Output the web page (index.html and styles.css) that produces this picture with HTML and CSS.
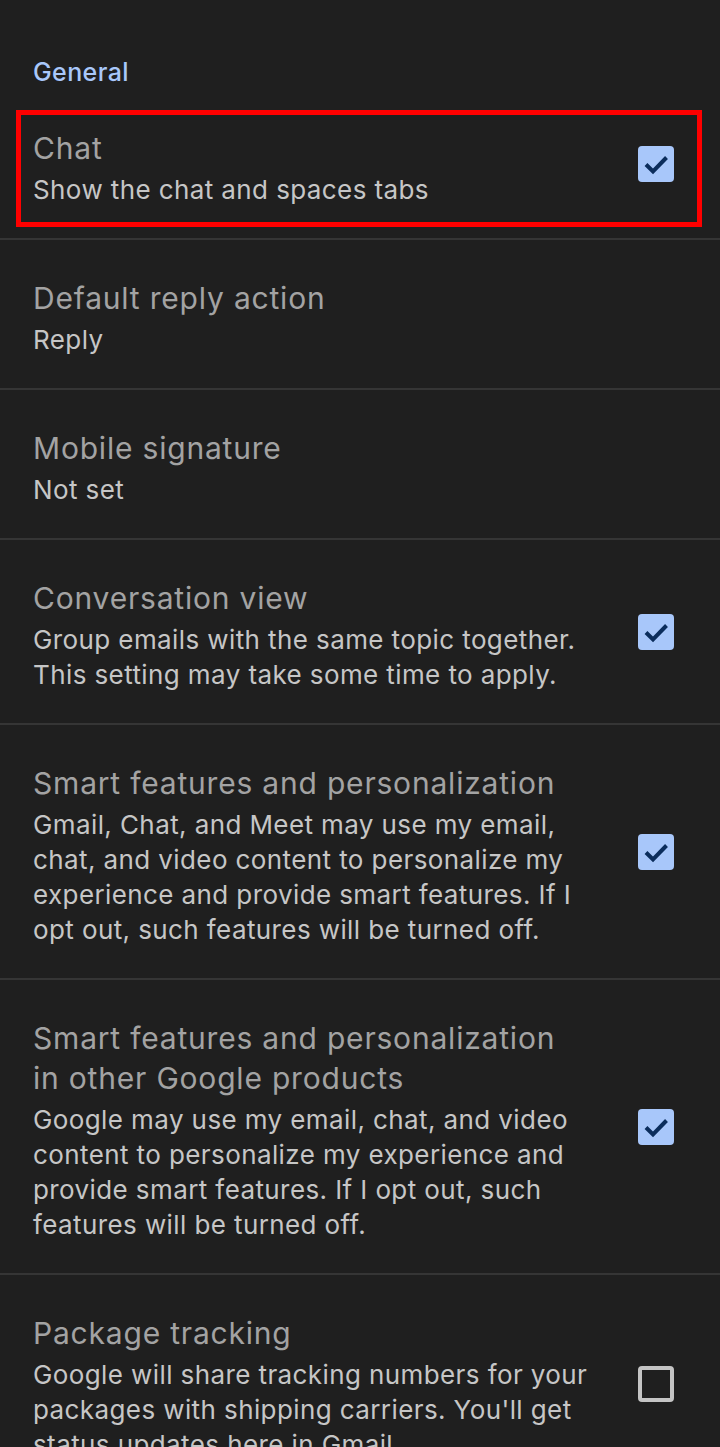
FILE: index.html
```html
<!DOCTYPE html>
<html lang="en">
<head>
<meta charset="utf-8">
<title>General settings</title>
<link rel="stylesheet" href="styles.css">
</head>
<body>
<div class="page">
  <div class="section-header">General</div>

  <div class="row highlighted">
    <div class="text">
      <div class="title">Chat</div>
      <div class="sub">Show the chat and spaces tabs</div>
    </div>
    <div class="cb checked"><svg viewBox="0 0 36 36"><path d="M8 18.5L15 25.5L28.5 11.5"/></svg></div>
  </div>

  <div class="row">
    <div class="text">
      <div class="title">Default reply action</div>
      <div class="sub">Reply</div>
    </div>
  </div>

  <div class="row">
    <div class="text">
      <div class="title">Mobile signature</div>
      <div class="sub">Not set</div>
    </div>
  </div>

  <div class="row">
    <div class="text">
      <div class="title">Conversation view</div>
      <div class="sub">Group emails with the same topic together. This setting may take some time to apply.</div>
    </div>
    <div class="cb checked"><svg viewBox="0 0 36 36"><path d="M8 18.5L15 25.5L28.5 11.5"/></svg></div>
  </div>

  <div class="row">
    <div class="text">
      <div class="title">Smart features and personalization</div>
      <div class="sub">Gmail, Chat, and Meet may use my email, chat, and video content to personalize my experience and provide smart features. If I opt out, such features will be turned off.</div>
    </div>
    <div class="cb checked"><svg viewBox="0 0 36 36"><path d="M8 18.5L15 25.5L28.5 11.5"/></svg></div>
  </div>

  <div class="row">
    <div class="text">
      <div class="title">Smart features and personalization in other Google products</div>
      <div class="sub">Google may use my email, chat, and video content to personalize my experience and provide smart features. If I opt out, such features will be turned off.</div>
    </div>
    <div class="cb checked"><svg viewBox="0 0 36 36"><path d="M8 18.5L15 25.5L28.5 11.5"/></svg></div>
  </div>

  <div class="row">
    <div class="text">
      <div class="title">Package tracking</div>
      <div class="sub">Google will share tracking numbers for your packages with shipping carriers. You'll get status updates here in Gmail.</div>
    </div>
    <div class="cb"></div>
  </div>
</div>
</body>
</html>
```

FILE: styles.css
```css
html, body {
  margin: 0;
  padding: 0;
  background: #1f1f1f;
}
body {
  font-family: Inter, Roboto, "Noto Sans", sans-serif;
  height: 1447px;
  overflow: hidden;
}
.page {
  display: flex;
  flex-direction: column;
}
.section-header {
  padding: 57px 33px 3px;
  height: 30px;
  line-height: 30px;
  font-size: 25px;
  letter-spacing: 0.4px;
  font-weight: 500;
  color: #a8c7fa;
}
.row {
  position: relative;
  display: flex;
  align-items: center;
  gap: 50px;
  padding: 38px 46px 31px 33px;
  border-bottom: 2px solid #353535;
}
.text {
  flex: 1;
  min-width: 0;
}
.title {
  font-size: 30px;
  letter-spacing: 0.8px;
  line-height: 40px;
  color: #a3a3a3;
  margin-bottom: 4px;
}
.sub {
  font-size: 26px;
  letter-spacing: 0.4px;
  line-height: 35px;
  color: #c6c6c6;
}
.cb {
  flex: none;
  width: 36px;
  height: 36px;
  box-sizing: border-box;
  border-radius: 4px;
  margin-bottom: 7px;
  border: 4px solid #c4c4c4;
}
.cb.checked {
  border: none;
  background: #a8c7fa;
}
.cb svg {
  display: block;
  width: 36px;
  height: 36px;
}
.cb svg path {
  fill: none;
  stroke: #0b2d5c;
  stroke-width: 4;
}
.highlighted::after {
  content: "";
  position: absolute;
  left: 16px;
  top: 20px;
  right: 18px;
  bottom: 11px;
  border: 5px solid #ff0000;
  pointer-events: none;
}
```
